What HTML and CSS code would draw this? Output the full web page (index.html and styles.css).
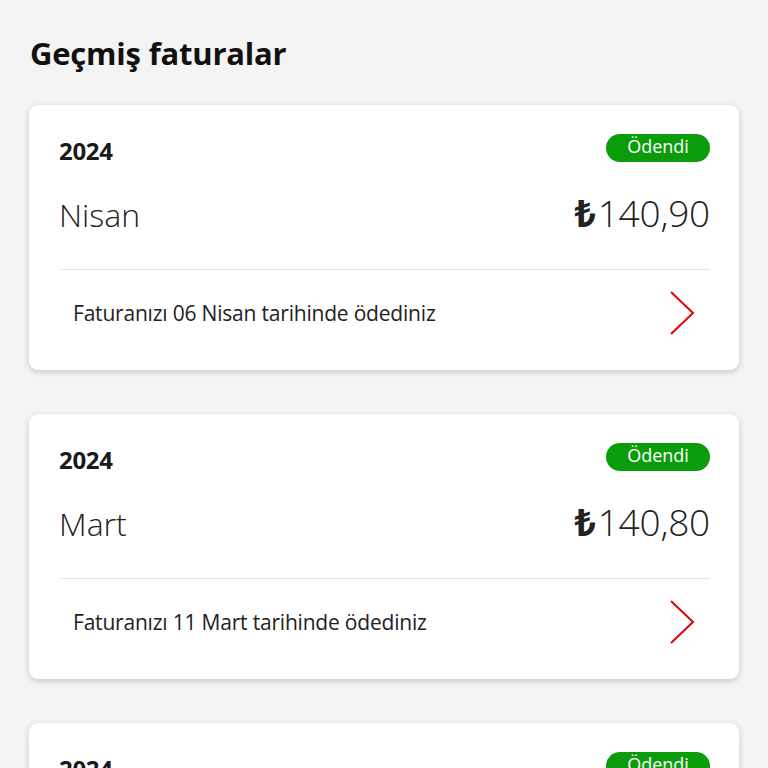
FILE: index.html
```html
<!DOCTYPE html>
<html lang="tr">
<head>
<meta charset="utf-8">
<link rel="stylesheet" href="styles.css">
</head>
<body>
<main class="page">
  <h1 class="title">Geçmiş faturalar</h1>
  <section class="card">
    <div class="card-head">
      <div class="top-row">
        <span class="year">2024</span>
        <span class="badge">Ödendi</span>
      </div>
      <div class="month-row">
        <span class="month">Nisan</span>
        <span class="amount"><span class="lira">₺</span>140,90</span>
      </div>
    </div>
    <div class="card-foot">
      <span class="note">Faturanızı 06 Nisan tarihinde ödediniz</span>
      <svg class="chev" width="26" height="44" viewBox="0 0 26 44"><path d="M2 1 L24 22 L2 43" fill="none" stroke="#e60000" stroke-width="2"/></svg>
    </div>
  </section>
  <section class="card">
    <div class="card-head">
      <div class="top-row">
        <span class="year">2024</span>
        <span class="badge">Ödendi</span>
      </div>
      <div class="month-row">
        <span class="month">Mart</span>
        <span class="amount"><span class="lira">₺</span>140,80</span>
      </div>
    </div>
    <div class="card-foot">
      <span class="note">Faturanızı 11 Mart tarihinde ödediniz</span>
      <svg class="chev" width="26" height="44" viewBox="0 0 26 44"><path d="M2 1 L24 22 L2 43" fill="none" stroke="#e60000" stroke-width="2"/></svg>
    </div>
  </section>
  <section class="card">
    <div class="card-head">
      <div class="top-row">
        <span class="year">2024</span>
        <span class="badge">Ödendi</span>
      </div>
      <div class="month-row">
        <span class="month">Şubat</span>
        <span class="amount"><span class="lira">₺</span>140,70</span>
      </div>
    </div>
    <div class="card-foot">
      <span class="note">Faturanızı 08 Şubat tarihinde ödediniz</span>
      <svg class="chev" width="26" height="44" viewBox="0 0 26 44"><path d="M2 1 L24 22 L2 43" fill="none" stroke="#e60000" stroke-width="2"/></svg>
    </div>
  </section>
</main>
</body>
</html>
```

FILE: styles.css
```css
html, body {
  margin: 0;
  padding: 0;
  background: #f4f4f4;
  height: 768px;
  overflow: hidden;
}
body {
  font-family: "Open Sans", "Noto Sans", sans-serif;
  color: #1a1a1a;
}
.page {
  padding: 33px 29px 0 29px;
  display: flex;
  flex-direction: column;
}
.title {
  margin: 0 0 32px 1px;
  font-size: 31px;
  line-height: 40px;
  font-weight: 700;
  letter-spacing: -0.2px;
  color: #111;
}
.card {
  background: #fff;
  border-radius: 9px;
  box-shadow: 0 2px 6px rgba(0, 0, 0, 0.18);
  height: 265px;
  flex: none;
  margin-bottom: 44px;
  padding: 0 29px 0 30px;
  display: flex;
  flex-direction: column;
}
.card-head {
  height: 165px;
  border-bottom: 1px solid #e4e4e4;
  padding-top: 29px;
  box-sizing: border-box;
}
.top-row {
  height: 28px;
  display: flex;
  justify-content: space-between;
  align-items: center;
}
.year {
  font-size: 24px;
  font-weight: 700;
  letter-spacing: -0.3px;
  position: relative;
  top: 2px;
}
.badge {
  background: #0a9c0a;
  color: #fff;
  border-radius: 14px;
  width: 104px;
  height: 28px;
  font-size: 18px;
  line-height: 24px;
  text-align: center;
}
.month-row {
  margin-top: 28px;
  display: flex;
  justify-content: space-between;
  align-items: baseline;
}
.month {
  font-size: 32px;
  font-weight: 300;
  line-height: 46px;
  color: #222;
}
.amount {
  font-size: 37px;
  font-weight: 300;
  line-height: 46px;
  color: #222;
  letter-spacing: -0.2px;
}
.lira {
  font-weight: 700;
  margin-right: 2px;
}
.card-foot {
  flex: 1;
  display: flex;
  align-items: center;
  justify-content: space-between;
  padding: 0 15px 14px 14px;
}
.note {
  font-size: 21px;
  color: #222;
  letter-spacing: -0.2px;
}
.chev {
  display: block;
}
```
